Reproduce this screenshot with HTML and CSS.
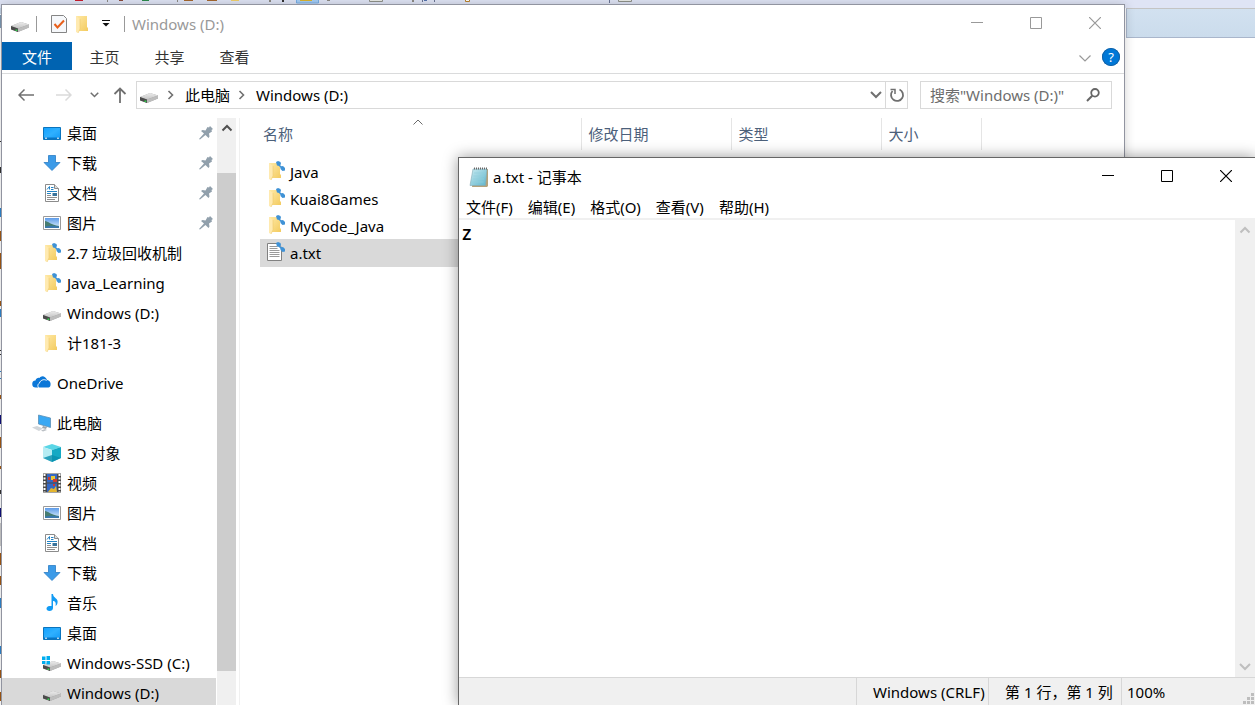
FILE: index.html
```html
<!DOCTYPE html>
<html lang="zh-CN">
<head>
<meta charset="utf-8">
<title>Windows (D:)</title>
<link rel="stylesheet" href="styles.css">
</head>
<body>
<svg class="defs" width="0" height="0" aria-hidden="true">
  <defs>
    <linearGradient id="gFolder" x1="0" y1="0" x2="1" y2="1"><stop offset="0" stop-color="#ffe9a6"/><stop offset="1" stop-color="#f3cb5f"/></linearGradient>
    <linearGradient id="gDrive" x1="0" y1="0" x2="0" y2="1"><stop offset="0" stop-color="#ececec"/><stop offset="1" stop-color="#c4c4c4"/></linearGradient>
    <linearGradient id="gSky" x1="0" y1="0" x2="0" y2="1"><stop offset="0" stop-color="#5c9bea"/><stop offset="1" stop-color="#dff0fb"/></linearGradient>
    <linearGradient id="gDesk" x1="0" y1="0" x2="1" y2="1"><stop offset="0" stop-color="#12a2ff"/><stop offset=".5" stop-color="#2fb0ff"/><stop offset="1" stop-color="#0f98f6"/></linearGradient>
    <linearGradient id="gPad" x1="0" y1="0" x2="1" y2="1"><stop offset="0" stop-color="#c9eaf0"/><stop offset="1" stop-color="#5fb6cc"/></linearGradient>
  </defs>
  <symbol id="folder" viewBox="0 0 20 20"><path d="M3 2h11v11l1 1v3H5z" fill="url(#gFolder)"/><path d="M3 2l4 3v10l-2 4-2-1z" fill="#ffeab0"/><path d="M5 19l2-4V5" fill="none" stroke="#efcb6c" stroke-width=".6"/></symbol>
  <symbol id="link" viewBox="0 0 20 20"><path d="M10 1l2-1 2.500 1 .5 2-1.500 2-2.500-.5zM14.500 5.500l2.500-.5 2 2v2.500l-2.500.5-2-2z" fill="#3f92d6"/><path d="M13 4l3 3" stroke="#3f92d6" stroke-width="1.500"/></symbol>
  <symbol id="drive" viewBox="0 0 20 20"><path d="M1 12l10-4 8 2.500v3L8 18l-7-3z" fill="#9d9d9d"/><path d="M1 12l10-4 8 2.500L8 14.500z" fill="url(#gDrive)"/><path d="M1 12l7 2.500V18l-7-2.500z" fill="#4b4b4b"/><path d="M8 14.500l11-4v3L8 18z" fill="#bdbdbd"/><path d="M5.500 15.500h1.800v1.500H5.500z" fill="#2fd34a"/></symbol>
  <symbol id="ssd" viewBox="0 0 20 20"><use href="#drive"/><path d="M0 3.500h3.500V7H0zM4.500 3H8v4H4.500zM0 8h3.500v3H0zM4.500 8H8v3.500H4.500z" fill="#00adef"/></symbol>
  <symbol id="desktop" viewBox="0 0 20 20"><path d="M1.500 4.500h17v12h-17z" fill="url(#gDesk)" stroke="#0b74bd"/><path d="M2 14.500h16v1.500H2z" fill="#0875c4"/><path d="M3 15.200h2M15 15.200h2" stroke="#fff"/></symbol>
  <symbol id="down" viewBox="0 0 20 20"><path d="M6.500 2.500h7v7h4.500l-8 8-8-8h4.500z" fill="#3c9be8" stroke="#2a7cc4" stroke-width=".8"/></symbol>
  <symbol id="doc" viewBox="0 0 20 20"><path d="M3.500 1.500h9l4 4v13h-13z" fill="#fff" stroke="#8c8c8c"/><path d="M12.500 1.500v4h4" fill="#ddd" stroke="#8c8c8c"/><path d="M5 6.500l2.500-3v3M9 4.500h2.500M9 6.500h2.500M5 8.500h10M5 10.500h4" stroke="#2383c4" fill="none"/><path d="M5 12.500h4M5 14.500h10M5 16.500h8" stroke="#8e8e8e"/><path d="M10.500 10h4.500v3h-4.500z" fill="#38739b"/></symbol>
  <symbol id="text" viewBox="0 0 20 20"><path d="M1.500 1.500h11l3 4v13h-14z" fill="#fff" stroke="#818181"/><path d="M3.500 4.500h8M3.500 6.500h8M3.500 8.500h10M3.500 10.500h10M3.500 12.500h10M3.500 14.500h10" stroke="#9a9a9a"/></symbol>
  <symbol id="pic" viewBox="0 0 20 20"><path d="M1.500 3.500h17v13h-17z" fill="#fff" stroke="#9a9a9a"/><path d="M3 5h14v10H3z" fill="url(#gSky)"/><path d="M3 8c3 0 6 4 14 5v2H3z" fill="#467c70"/><path d="M3 13.500c5-1 9-1 14 0V15H3z" fill="#3a78ad"/></symbol>
  <symbol id="cloud" viewBox="0 0 20 20"><path d="M4 14.500a3.500 3.500 0 0 1-.5-7c.5-2 2.500-3 4-2.500C9 2.500 13 2 15 7c3 .5 4 3 3.500 5 0 1.500-1 2.500-2 2.500z" fill="#0b77d8"/><path d="M7 15c-2-2-1-4 .5-5 .5-2.500 4.500-4.500 7-2.500" fill="none" stroke="#fff"/></symbol>
  <symbol id="pc" viewBox="0 0 20 20"><path d="M6.500 2l12 3v9.500l-12-3.500z" fill="#39a8f3" stroke="#5c90b6" stroke-width=".8"/><path d="M11 13l4 1-1 2-4-1z" fill="#9ea6ac"/><path d="M0 14.500l5-1.500 6 2.500-4 2.500z" fill="#d2d6da"/><path d="M9 17.500l4-1.500 2 1-4 1.500z" fill="#bbc0c5"/></symbol>
  <symbol id="cube" viewBox="0 0 20 20"><path d="M1 4l9-3 9 3-9 3z" fill="#5ad6e6"/><path d="M1 4l9 3v12l-9-4z" fill="#b6ecf3"/><path d="M10 7l9-3v11l-9 4z" fill="#14a9c4"/><path d="M1 15l9-3 9 3-9 4z" fill="#078fae" opacity=".8"/></symbol>
  <symbol id="film" viewBox="0 0 20 20"><path d="M1 .500h18v19H1z" fill="#4a4a4a"/><path d="M5 1h10v8.500H5zM5 10.500h10V19H5z" fill="#3468c4"/><path d="M2.500 1v18M17.500 1v18" stroke="#fff" stroke-width="2" stroke-dasharray="2 1.500"/><path d="M9 3h4v4H9z" fill="#ebc836"/><path d="M11 6h4v3h-4zM6 4h2v3H6zM11 11h2v2h-2z" fill="#cf3a31"/><path d="M6 19l3-4 3 1 2-3 1 6z" fill="#e4b52f"/></symbol>
  <symbol id="music" viewBox="0 0 20 20"><path d="M9.500 1h1.500c0 4 5.500 4 4.500 9-.5 2-1 2-2 3 1-4-1-5-2.500-5v7c0 2-1.500 3-3.500 3-4 0-4-4.500 0-5h2z" fill="#129bf4"/></symbol>
  <symbol id="pin" viewBox="0 0 14 14"><path d="M8.500 1l1.500.5L11 0l3 3-1.500 1 .5 1.500-3 2 .5 3-1 1.500L6.500 9 1 13.500 0 13l5-5.500L2 5l1.500-1 3 .5z" fill="#91a0ac"/></symbol>
  <symbol id="chevD" viewBox="0 0 12 8"><path d="M.5 1.500L6 7l5.500-5.500" fill="none" stroke="currentColor" stroke-width="1.200"/></symbol>
  <symbol id="chevDB" viewBox="0 0 12 8"><path d="M1 1l5 5 5-5" fill="none" stroke="currentColor" stroke-width="2"/></symbol>
  <symbol id="chevU" viewBox="0 0 12 8"><path d="M1.500 6.500L6 2l4.500 4.500" fill="none" stroke="currentColor" stroke-width="2"/></symbol>
  <symbol id="chevR" viewBox="0 0 8 12"><path d="M1.500 2l4 4-4 4" fill="none" stroke="currentColor" stroke-width="1.600"/></symbol>
  <symbol id="min" viewBox="0 0 12 12"><path d="M0 5.500h12" stroke="currentColor"/></symbol>
  <symbol id="max" viewBox="0 0 12 12"><path d="M.5.5h11v11H.500z" fill="none" stroke="currentColor"/></symbol>
  <symbol id="close" viewBox="0 0 12 12"><path d="M0 0l12 12M12 0L0 12" stroke="currentColor" stroke-width="1.200"/></symbol>
</svg>

<div class="ide" aria-hidden="true">
  <svg class="ide-tools" width="660" height="4" viewBox="0 0 660 4">
    <path d="M75 0h8v1h-8z" fill="#c81e2d"/><path d="M119 0h4v1h-4z" fill="#8a4b3b"/><path d="M142 0h7v1h-7z" fill="#2b8a4d"/>
    <path d="M184 0h9v1h-9zM207 0h10v1h-10z" fill="#a5672f"/><path d="M231 0h8v1h-8z" fill="#f0cf6b"/>
    <path d="M107 0h1v2h-1zM177 0h1v2h-1zM269 0h2v2h-2zM412 0h2v2h-2zM327 0h3v1h-3z" fill="#8c8984"/><path d="M282 0h2v2h-2z" fill="#333"/>
    <path d="M296.500-1h22v4h-22z" fill="#a5cdf5" stroke="#76aee6"/><path d="M300 0h12v1h-12z" fill="#d9b32f"/>
    <path d="M369.500-1h13v2.500h-13zM618.500-1h13v2.500h-13z" fill="#e8ebe6" stroke="#8e918a"/><path d="M422 0h1v2h-1zM434 0h1v2h-1zM609 0h1v3h-1z" fill="#6a7494"/><path d="M424 0h3v1h-3z" fill="#5472ad"/><path d="M465.500-1h4v2.500h-4z" fill="#fff" stroke="#b9822c"/>
  </svg>
  <div class="ide-tabs"></div>
  <svg class="ide-code" width="2" height="705" viewBox="0 0 2 705">
    <path d="M0 8h2v6H0z" fill="#c5d5e8"/><path d="M0 15h2v13H0z" fill="#7f9bb5"/>
    <path d="M0 141h2v1H0zM0 167h1v6H0zM0 350h2v1H0zM0 354h2v1H0zM0 490h2v4H0z" fill="#333"/>
    <path d="M0 208h2v9H0zM0 309h1v8H0zM0 371h2v1H0zM0 378h2v1H0zM0 598h2v10H0zM0 646h2v8H0z" fill="#2f86d0"/>
    <path d="M0 231h1v10H0zM0 253h1v16H0zM0 301h2v5H0zM0 395h2v4H0zM0 437h2v11H0zM0 466h2v3H0zM0 553h2v12H0zM0 576h2v9H0zM0 670h2v8H0zM0 692h2v9H0z" fill="#a35a14"/>
    <path d="M0 415h2v9H0zM0 508h2v9H0z" fill="#10107c"/><path d="M0 523h2v23H0z" fill="#ccc"/>
  </svg>
</div>

<main class="window explorer">
  <header class="titlebar">
    <svg class="icon20 quick-drive"><use href="#drive"/></svg>
    <span class="bar"></span>
    <button class="bare" aria-label="属性"><svg width="16" height="18" viewBox="0 0 16 18"><path d="M.5.500h12l3 3v14H.500z" fill="#f6f8fb" stroke="#858585"/><path d="M3.500 9l3 3.500L13 5.500" fill="none" stroke="#e8601c" stroke-width="2"/></svg></button>
    <button class="bare" aria-label="新建文件夹"><svg class="icon20"><use href="#folder"/></svg></button>
    <button class="bare" aria-label="自定义快速访问工具栏"><svg width="8" height="7" viewBox="0 0 8 7"><path d="M0 .500h8" stroke="#111"/><path d="M.5 3h7L4 6.500z" fill="#111"/></svg></button>
    <span class="bar"></span>
    <h1 class="title">Windows (D:)</h1>
    <div class="controls">
      <button aria-label="最小化"><svg class="icon12"><use href="#min"/></svg></button>
      <button aria-label="最大化"><svg class="icon12"><use href="#max"/></svg></button>
      <button aria-label="关闭"><svg class="icon12"><use href="#close"/></svg></button>
    </div>
  </header>

  <nav class="ribbon">
    <button class="tab tab-file">文件</button>
    <button class="tab">主页</button>
    <button class="tab">共享</button>
    <button class="tab">查看</button>
    <button class="bare expand" aria-label="展开功能区"><svg class="chev"><use href="#chevD"/></svg></button>
    <button class="help" aria-label="帮助">?</button>
  </nav>

  <div class="address-row">
    <button class="bare back" aria-label="后退"><svg width="16" height="14" viewBox="0 0 16 14"><path d="M1 7h15M6.500 1.500L1 7l5.500 5.500" fill="none" stroke="#707070" stroke-width="1.500"/></svg></button>
    <button class="bare forward" aria-label="前进"><svg width="16" height="14" viewBox="0 0 16 14"><path d="M0 7h15M9.500 1.500L15 7l-5.500 5.500" fill="none" stroke="#dadada" stroke-width="1.500"/></svg></button>
    <button class="bare recent" aria-label="最近浏览"><svg width="9" height="6"><use href="#chevDB"/></svg></button>
    <button class="bare up" aria-label="上移"><svg width="14" height="16" viewBox="0 0 14 16"><path d="M7 1v15M1.500 7L7 1.500 12.500 7" fill="none" stroke="#707070" stroke-width="1.800"/></svg></button>
    <div class="address">
      <svg class="icon20"><use href="#drive"/></svg>
      <svg class="crumb-sep"><use href="#chevR"/></svg>
      <a class="crumb" href="#pc">此电脑</a>
      <svg class="crumb-sep"><use href="#chevR"/></svg>
      <a class="crumb" href="#d">Windows (D:)</a>
      <button class="bare history" aria-label="历史"><svg class="chev"><use href="#chevDB"/></svg></button>
      <button class="refresh" aria-label="刷新"><svg width="16" height="16" viewBox="0 0 16 16"><path d="M10.500 2.500A6 6 0 1 1 3.500 4" fill="none" stroke="#6f6f6f" stroke-width="1.800"/><path d="M1.500 2.500h4.500V7" fill="none" stroke="#6f6f6f" stroke-width="1.500"/></svg></button>
    </div>
    <label class="search">
      <input type="text" aria-label="搜索" placeholder="搜索&quot;Windows (D:)&quot;">
      <svg width="14" height="14" viewBox="0 0 14 14"><circle cx="9" cy="4.800" r="3.800" fill="none" stroke="#666" stroke-width="1.800"/><path d="M6.200 7.800L1 13" stroke="#666" stroke-width="2"/></svg>
    </label>
  </div>

  <div class="content">
    <aside class="sidebar">
      <ul class="tree">
        <li class="node"><svg class="icon20"><use href="#desktop"/></svg><span>桌面</span><svg class="pin"><use href="#pin"/></svg></li>
        <li class="node"><svg class="icon20"><use href="#down"/></svg><span>下载</span><svg class="pin"><use href="#pin"/></svg></li>
        <li class="node"><svg class="icon20"><use href="#doc"/></svg><span>文档</span><svg class="pin"><use href="#pin"/></svg></li>
        <li class="node"><svg class="icon20"><use href="#pic"/></svg><span>图片</span><svg class="pin"><use href="#pin"/></svg></li>
        <li class="node"><svg class="icon20"><use href="#folder"/><use href="#link"/></svg><span>2.7 垃圾回收机制</span></li>
        <li class="node"><svg class="icon20"><use href="#folder"/><use href="#link"/></svg><span>Java_Learning</span></li>
        <li class="node"><svg class="icon20"><use href="#drive"/></svg><span>Windows (D:)</span></li>
        <li class="node"><svg class="icon20"><use href="#folder"/></svg><span>计181-3</span></li>
      </ul>
      <ul class="tree">
        <li class="node root"><svg class="icon20"><use href="#cloud"/></svg><span>OneDrive</span></li>
      </ul>
      <ul class="tree">
        <li class="node root"><svg class="icon20"><use href="#pc"/></svg><span>此电脑</span></li>
        <li class="node"><svg class="icon20"><use href="#cube"/></svg><span>3D 对象</span></li>
        <li class="node"><svg class="icon20"><use href="#film"/></svg><span>视频</span></li>
        <li class="node"><svg class="icon20"><use href="#pic"/></svg><span>图片</span></li>
        <li class="node"><svg class="icon20"><use href="#doc"/></svg><span>文档</span></li>
        <li class="node"><svg class="icon20"><use href="#down"/></svg><span>下载</span></li>
        <li class="node"><svg class="icon20"><use href="#music"/></svg><span>音乐</span></li>
        <li class="node"><svg class="icon20"><use href="#desktop"/></svg><span>桌面</span></li>
        <li class="node"><svg class="icon20"><use href="#ssd"/></svg><span>Windows-SSD (C:)</span></li>
        <li class="node selected"><svg class="icon20"><use href="#drive"/></svg><span>Windows (D:)</span></li>
      </ul>
    </aside>
    <div class="scrollbar side-scroll"><svg class="chev"><use href="#chevU"/></svg><div class="thumb"></div></div>
    <section class="files">
      <table class="list">
        <colgroup><col class="c-name"><col class="c-mid"><col class="c-mid"><col class="c-size"><col></colgroup>
        <thead><tr><th><span>名称</span><svg class="sort" viewBox="0 0 12 8"><path d="M1.500 6.500L6 2l4.500 4.500" fill="none" stroke="#6b6b6b"/></svg></th><th>修改日期</th><th>类型</th><th>大小</th><th></th></tr></thead>
        <tbody>
          <tr><td><div class="file"><svg class="icon20"><use href="#folder"/><use href="#link"/></svg>Java</div></td><td></td><td></td><td></td><td></td></tr>
          <tr><td><div class="file"><svg class="icon20"><use href="#folder"/><use href="#link"/></svg>Kuai8Games</div></td><td></td><td></td><td></td><td></td></tr>
          <tr><td><div class="file"><svg class="icon20"><use href="#folder"/><use href="#link"/></svg>MyCode_Java</div></td><td></td><td></td><td></td><td></td></tr>
          <tr class="selected"><td><div class="file"><svg class="icon20"><use href="#text"/><use href="#link"/></svg>a.txt</div></td><td></td><td></td><td></td><td></td></tr>
        </tbody>
      </table>
    </section>
  </div>
</main>

<section class="window notepad">
  <header class="np-title">
    <svg width="20" height="20" viewBox="0 0 20 20"><path d="M5 2h14v17l-1 1H3z" fill="#b5a27a"/><path d="M4 2h14l-1.500 16.500H1z" fill="url(#gPad)" stroke="#83aab5" stroke-width=".6"/><path d="M5 6h11M4.500 9h11M4 12h11M3.500 15h11" stroke="#93cfdd" stroke-width=".7"/><path d="M5 1.500h13" stroke="#666" stroke-width="2" stroke-dasharray="1 1"/></svg>
    <h2 class="title">a.txt - 记事本</h2>
    <div class="controls">
      <button aria-label="最小化"><svg class="icon12"><use href="#min"/></svg></button>
      <button aria-label="最大化"><svg class="icon12"><use href="#max"/></svg></button>
      <button aria-label="关闭"><svg class="icon12"><use href="#close"/></svg></button>
    </div>
  </header>
  <nav class="menu">
    <button>文件(F)</button><button>编辑(E)</button><button>格式(O)</button><button>查看(V)</button><button>帮助(H)</button>
  </nav>
  <div class="editor">
    <textarea aria-label="文本编辑器" spellcheck="false">z</textarea>
    <div class="scrollbar edit-scroll"><svg class="chev"><use href="#chevU"/></svg><svg class="chev"><use href="#chevDB"/></svg></div>
  </div>
  <footer class="status">
    <span class="cell crlf">Windows (CRLF)</span>
    <span class="cell pos">第 1 行，第 1 列</span>
    <span class="cell zoom">100%</span>
    <svg class="grip" width="12" height="12" viewBox="0 0 12 12"><path d="M9 1h3v3H9zM5 5h3v3H5zM9 5h3v3H9zM1 9h3v3H1zM5 9h3v3H5zM9 9h3v3H9z" fill="#bdbdbd"/></svg>
  </footer>
</section>
</body>
</html>
```
FILE: styles.css
```css
* { box-sizing: border-box; }
html, body { height: 100%; }
body {
  margin: 0;
  position: relative;
  overflow: hidden;
  background: #fff;
  color: #000;
  font: 15px/20px "Noto Sans", "Noto Sans CJK SC", sans-serif;
}
h1, h2, ul { margin: 0; padding: 0; }
ul { list-style: none; }
button { font: inherit; color: inherit; background: none; border: 0; padding: 0; }
a { color: inherit; text-decoration: none; }
svg { display: block; flex: none; }
.defs { position: absolute; }
.icon20 { width: 20px; height: 20px; }
.icon12 { width: 12px; height: 12px; }
.chev { width: 12px; height: 8px; }
.bare { display: flex; align-items: center; justify-content: center; }
.title { font-size: 15px; font-weight: 400; white-space: nowrap; }

/* editor visible behind the windows */
.ide { height: 100%; background: linear-gradient(#dfe4f5 8px, #fff 8px); }
.ide-tools { position: absolute; }
.ide-tabs { position: absolute; top: 8px; right: 0; width: 129px; height: 30px; background: linear-gradient(#d2e1f0, #cbdcec); border: 1px solid #a9b6cb; border-width: 1px 0 1px 1px; border-top-color: #c4c4c4; }
.ide-code { position: absolute; top: 0; left: 0; }

.window { position: absolute; bottom: 0; display: flex; flex-direction: column; background: #fff; }
.explorer { top: 4px; left: 1px; right: 130px; border: 1px solid #9194a0; border-bottom: 0; box-shadow: 0 0 10px rgba(0, 0, 0, .18); }
.notepad { top: 157px; left: 458px; right: 0; border: 1px solid #666; border-width: 1px 0 0 1px; box-shadow: 0 0 14px rgba(0, 0, 0, .4); }

.titlebar { display: flex; align-items: center; height: 37px; padding-left: 8px; color: #999; }
.bar { width: 1px; height: 16px; background: #999; }
.quick-drive { margin-right: 6px; }
.titlebar .bar + .bare { margin: 0 6px 0 14px; }
.titlebar .bare + .bare { margin-right: 9px; }
.titlebar .bare + .bar { margin: 0 7px 0 5px; }
.controls { display: flex; align-self: stretch; margin-left: auto; }
.controls button { width: 59px; height: 36px; display: flex; align-items: center; justify-content: center; }

.ribbon { display: flex; align-items: center; height: 32px; border-bottom: 1px solid #dadbdc; color: #333; }
.tab { height: 28px; width: 65px; align-self: flex-start; padding-top: 1px; }
.tab-file { width: 70px; background: #0063b1; color: #fff; }
.expand { margin-left: auto; color: #999; }
.help { width: 18px; height: 18px; margin: 0 4px 2px 11px; border-radius: 9px; background: #0078d7; color: #fff; font-size: 13px; line-height: 18px; box-shadow: inset 0 0 0 1px #1462a5; }

.address-row { display: flex; align-items: center; height: 44px; padding: 0 12px 2px 16px; color: #707070; }
.forward { margin-left: 22px; }
.recent { margin-left: 18px; }
.up { margin: 0 9px 0 14px; }
.address { flex: 1; display: flex; align-items: center; height: 28px; border: 1px solid #d9d9d9; padding-left: 2px; }
.crumb { color: #000; }
.crumb-sep { width: 8px; height: 12px; margin: 0 10px 0 8px; }
.history { margin-left: auto; }
.refresh { width: 22px; height: 26px; margin-left: 3px; border-left: 1px solid #d9d9d9; display: flex; align-items: center; justify-content: center; }
.search { display: flex; align-items: center; width: 192px; height: 28px; margin-left: 12px; padding: 0 11px 0 9px; border: 1px solid #d9d9d9; }
.search input { flex: 1; min-width: 0; border: 0; padding: 0; font: inherit; outline: 0; }
.search input::placeholder { color: #6d6d6d; opacity: 1; }

.content { flex: 1; min-height: 0; display: flex; overflow: hidden; }
.sidebar { width: 215px; overflow: hidden; }
.tree + .tree { margin-top: 10px; }
.node { display: flex; align-items: center; gap: 5px; height: 30px; padding: 0 4px 0 40px; white-space: nowrap; }
.node.root { padding-left: 30px; }
.selected { background: #d9d9d9; }
.node.selected { margin-right: 1px; }
.pin { width: 14px; height: 14px; margin-left: auto; }
.scrollbar { display: flex; flex-direction: column; align-items: center; background: #f0f0f0; }
.side-scroll { width: 19px; padding: 6px 0 34px; color: #505050; }
.thumb { width: 19px; flex: 1; margin-top: 41px; background: #cdcdcd; }
.files { flex: 1; margin-left: 3px; padding-left: 20px; border-left: 1px solid #f0f0f0; }
.list { width: 100%; table-layout: fixed; border-collapse: collapse; }
.c-name { width: 321px; }
.c-mid { width: 150px; }
.c-size { width: 100px; }
.list th { position: relative; height: 32px; padding: 0 0 0 7px; border-right: 1px solid #e5e5e5; color: #4c607a; font-weight: 400; text-align: left; }
.list th:first-child { padding-left: 3px; }
.list th:last-child { border-right: 0; }
.sort { position: absolute; top: 0; left: 50%; width: 12px; height: 8px; margin-left: -8px; }
.list td { height: 27px; padding: 0; }
.list .selected td { height: 28px; }
.list tbody::before { content: ""; display: block; height: 8px; }
.file { display: flex; align-items: center; gap: 4px; padding-left: 6px; }
.file svg { margin-bottom: 2px; }

.np-title { display: flex; align-items: center; gap: 4px; height: 37px; padding-left: 10px; }
.menu { display: flex; gap: 15px; height: 25px; padding-left: 7px; border-bottom: 2px solid #f0f0f0; }
.editor { flex: 1; min-height: 0; display: flex; }
.editor textarea { flex: 1; border: 0; outline: 0; resize: none; padding: 2px 3px; background: #fff; color: #000; font: 500 20px/22px "Noto Sans", sans-serif; }
.edit-scroll { width: 20px; padding: 6px 0; justify-content: space-between; color: #bfbfbf; }
.status { position: relative; display: flex; justify-content: flex-end; height: 28px; background: #f0f0f0; border-top: 1px solid #d7d7d7; }
.cell { border-left: 1px solid #d7d7d7; line-height: 28px; white-space: nowrap; overflow: hidden; }
.crlf { width: 132px; padding-left: 16px; }
.pos { width: 133px; padding-left: 16px; }
.zoom { width: 134px; padding-left: 5px; }
.grip { position: absolute; right: 1px; bottom: 1px; }
```
